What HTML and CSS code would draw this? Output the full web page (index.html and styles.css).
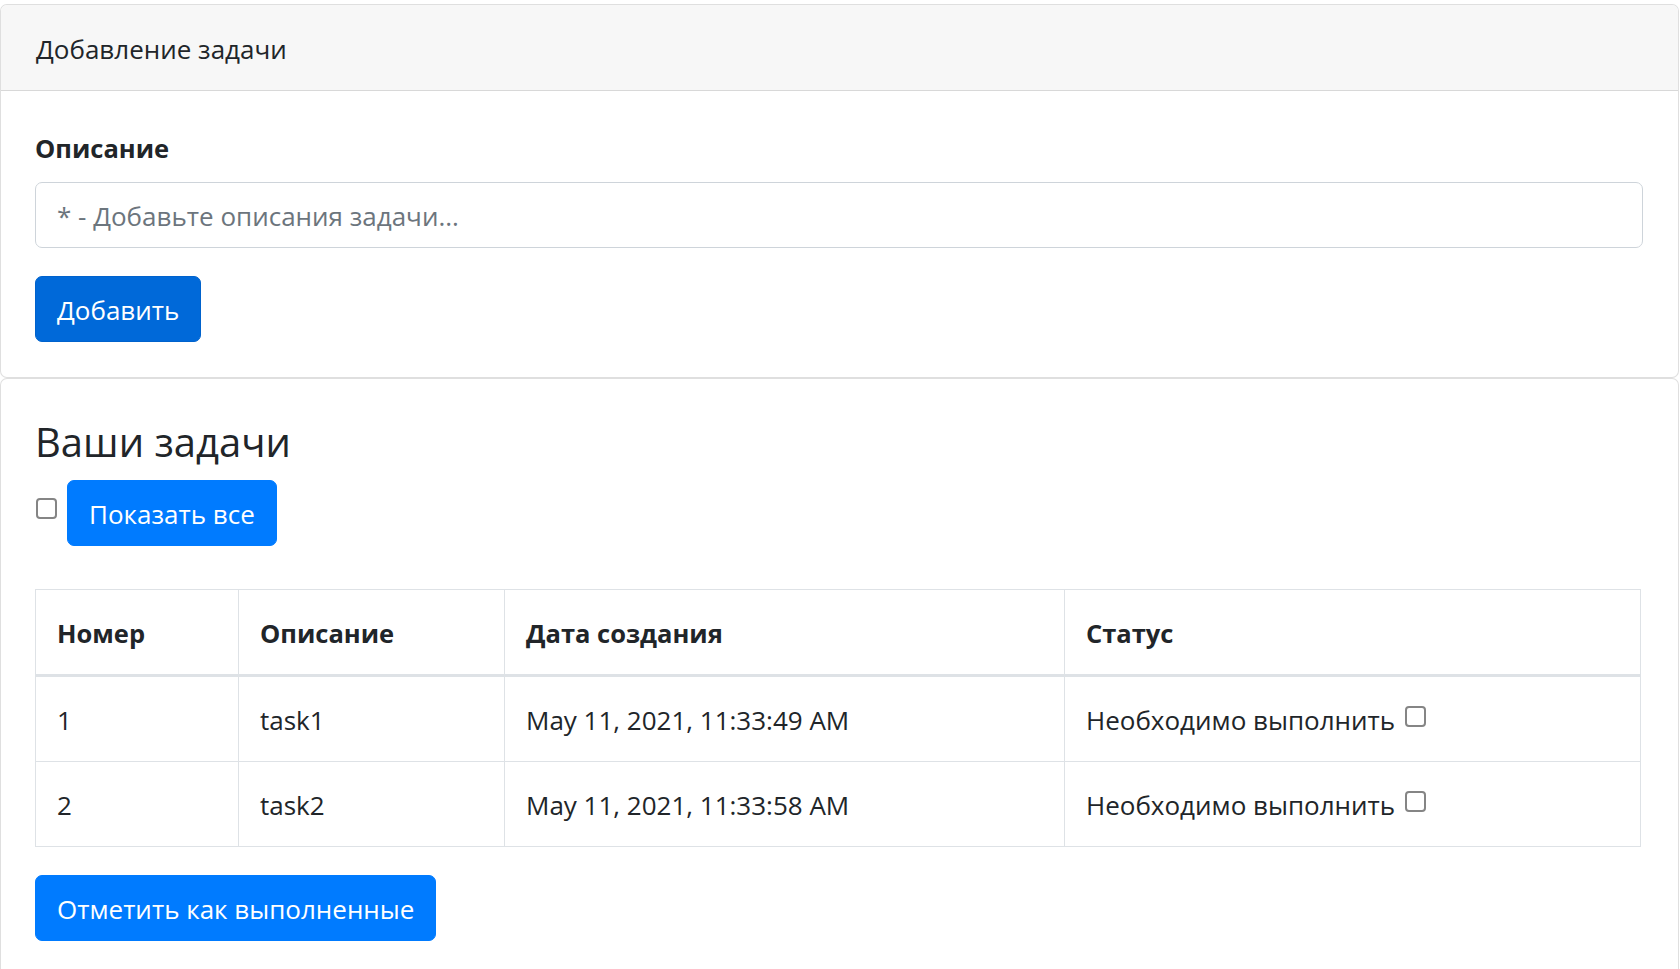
FILE: index.html
```html
<!DOCTYPE html>
<html lang="ru">
<head>
<meta charset="utf-8">
<title>Задачи</title>
<link rel="stylesheet" href="styles.css">
</head>
<body>
<div class="card">
  <div class="card-header">Добавление задачи</div>
  <div class="card-body">
    <div class="form-group">
      <label class="form-label" for="desc">Описание</label>
      <input id="desc" class="form-control" type="text" placeholder="* - Добавьте описания задачи...">
    </div>
    <button class="btn btn-dark-primary">Добавить</button>
  </div>
</div>
<div class="card">
  <div class="card-body">
    <h4 class="title">Ваши задачи</h4>
    <div class="toggle-row">
      <input type="checkbox" class="check check-toggle">
      <button class="btn btn-primary">Показать все</button>
    </div>
    <table class="tasks">
      <colgroup>
        <col class="c1"><col class="c2"><col class="c3"><col class="c4">
      </colgroup>
      <thead>
        <tr><th>Номер</th><th>Описание</th><th>Дата создания</th><th>Статус</th></tr>
      </thead>
      <tbody>
        <tr><td>1</td><td>task1</td><td>May 11, 2021, 11:33:49 AM</td><td>Необходимо выполнить <input type="checkbox" class="check check-inline"></td></tr>
        <tr><td>2</td><td>task2</td><td>May 11, 2021, 11:33:58 AM</td><td>Необходимо выполнить <input type="checkbox" class="check check-inline"></td></tr>
      </tbody>
    </table>
    <button class="btn btn-primary">Отметить как выполненные</button>
  </div>
</div>
</body>
</html>
```

FILE: styles.css
```css
* { box-sizing: border-box; }
html, body { margin: 0; padding: 0; background: #fff; }
body {
  padding-top: 4px;
  font-family: "Segoe UI", "Open Sans", "Noto Sans", sans-serif;
  font-size: 26px;
  line-height: 42px;
  color: #212529;
}
.card {
  margin-right: 1px;
  border: 1px solid rgba(0, 0, 0, 0.125);
  border-radius: 7px;
  background: #fff;
  overflow: hidden;
}
.card-header {
  padding: 23px 35px 20px;
  background: #f7f7f7;
  border-bottom: 1px solid rgba(0, 0, 0, 0.125);
}
.card-body {
  padding: 35px 35px 35px 34px;
}
.form-group { margin-bottom: 28px; }
.form-label {
  display: block;
  font-weight: 700;
  font-size: 25.5px;
  padding-top: 1px;
  margin-bottom: 13px;
}
.form-control {
  display: block;
  width: 100%;
  height: 66px;
  padding: 11px 21px 9px;
  font: inherit;
  color: #495057;
  border: 1px solid #ced4da;
  border-radius: 7px;
  background: #fff;
  outline: none;
}
.form-control::placeholder { color: #6c757d; opacity: 1; }
.btn {
  display: inline-block;
  height: 66px;
  padding: 2px 21px 0;
  font: inherit;
  line-height: 62px;
  color: #fff;
  border: 1px solid transparent;
  border-radius: 7px;
  cursor: pointer;
}
.btn-primary { background: #007bff; border-color: #007bff; }
.btn-dark-primary { background: #0069d9; border-color: #0062cc; }
.title {
  margin: 3px 0 13px;
  font-size: 40px;
  line-height: 50px;
  font-weight: 500;
}
.toggle-row {
  display: flex;
  align-items: flex-start;
  gap: 10px;
  margin-bottom: 43px;
}
.check {
  appearance: none;
  -webkit-appearance: none;
  width: 21px;
  height: 21px;
  border: 2px solid #858585;
  border-radius: 4px;
  background: #fff;
  margin: 0;
}
.check-toggle { margin-top: 18px; margin-left: 1px; }
.check-inline { vertical-align: baseline; margin: 0 0 3px 3px; }
.tasks {
  width: 1605px;
  border-collapse: collapse;
  margin-bottom: 28px;
  table-layout: fixed;
}
.tasks .c1 { width: 203px; }
.tasks .c2 { width: 266px; }
.tasks .c3 { width: 560px; }
.tasks .c4 { width: 576px; }
.tasks th, .tasks td {
  border: 1px solid #dee2e6;
  padding: 22px 21px 20px;
  text-align: left;
  vertical-align: top;
  white-space: nowrap;
}
.tasks th { font-weight: 700; font-size: 25.5px; border-bottom: 3px solid #dee2e6; }
```
